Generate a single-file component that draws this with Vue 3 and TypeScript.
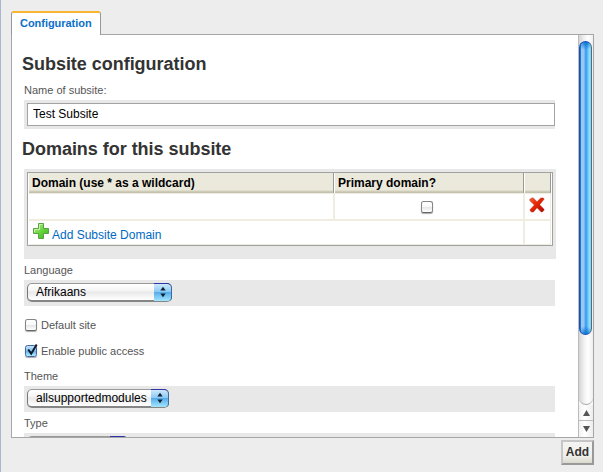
<script setup lang="ts">
import { ref } from 'vue'

const siteName = ref('Test Subsite')
const primary = ref(false)
const defaultSite = ref(false)
const publicAccess = ref(true)
</script>

<template>
  <main class="window">
    <nav class="tabs"><a class="tab">Configuration</a></nav>
    <section class="panel">
      <form class="content" @submit.prevent>
        <h3 class="h-first">Subsite configuration</h3>
        <label class="caption name-caption">Name of subsite:</label>
        <div class="band name-band"><input v-model="siteName" class="text" type="text" /></div>
        <h3 class="h-second">Domains for this subsite</h3>
        <div class="table-band">
          <div class="grid">
            <div class="row head">
              <div class="cell c1">Domain (use * as a wildcard)</div>
              <div class="cell c2">Primary domain?</div>
              <div class="cell c3"></div>
            </div>
            <div class="row entry">
              <div class="cell c1"></div>
              <div class="cell c2 center"><button type="button" class="check" @click="primary = !primary"></button></div>
              <div class="cell c3">
                <svg class="delete" width="16" height="16" viewBox="0 0 16 16">
                  <defs><linearGradient id="red" x2="1" y2="1"><stop stop-color="#e8694a" /><stop offset=".35" stop-color="#ee2d05" /><stop offset=".6" stop-color="#d91c05" /><stop offset="1" stop-color="#a80c08" /></linearGradient></defs>
                  <path d="M.8 2.3 3 .9h1.2L8 4.7 11.8 1h2.4l1 1L10.6 7.7l4.4 4.5v1L13.3 15h-1L8 10.7 4.4 15H2.6L1 13.5v-.8L5.4 8 .8 3.6Z" fill="url(#red)" stroke="#b52914" stroke-width=".5" />
                </svg>
              </div>
            </div>
            <div class="row add-row">
              <div class="cell span">
                <svg class="plus" width="16" height="16" viewBox="0 0 16 16">
                  <defs><linearGradient id="green" x2="1" y2="1"><stop stop-color="#b6ed8b" /><stop offset=".55" stop-color="#64d33a" /><stop offset="1" stop-color="#35ac17" /></linearGradient></defs>
                  <path d="M5.5.5h5v5h5v5h-5v5h-5v-5h-5v-5h5Z" fill="url(#green)" stroke="#57a343" />
                  <path d="M6.5 6.5v-5h3M1.5 9V6.5h5" fill="none" stroke="#caf2a9" />
                </svg>
                <a class="link">Add Subsite Domain</a>
              </div>
              <div class="cell c3"></div>
            </div>
          </div>
        </div>
        <label class="caption language">Language</label>
        <div class="band"><button type="button" class="select lang-select"><span class="value">Afrikaans</span><span class="stepper"><svg width="8" height="12" viewBox="0 0 8 12"><path d="M1.3 4.5 4 .7l2.7 3.8ZM1.3 7.5 4 11.3l2.7-3.8Z" fill="#102332" /></svg></span></button></div>
        <div class="option"><button type="button" class="check" @click="defaultSite = !defaultSite"></button><span>Default site</span></div>
        <div class="option">
          <button type="button" class="check checked" @click="publicAccess = !publicAccess">
            <svg v-if="publicAccess" width="14" height="15" viewBox="0 0 14 15"><path d="m3.2 6.5 3 4.2L11.7 1.5" fill="none" stroke="#101a2c" stroke-width="2" /></svg>
          </button><span>Enable public access</span>
        </div>
        <label class="caption theme">Theme</label>
        <div class="band"><button type="button" class="select theme-select"><span class="value">allsupportedmodules</span><span class="stepper"><svg width="8" height="12" viewBox="0 0 8 12"><path d="M1.3 4.5 4 .7l2.7 3.8ZM1.3 7.5 4 11.3l2.7-3.8Z" fill="#102332" /></svg></span></button></div>
        <label class="caption type">Type</label>
        <div class="band"><button type="button" class="select type-select"><span class="value"></span><span class="stepper"></span></button></div>
      </form>
      <aside class="scroll">
        <div class="track"><div class="thumb"></div></div>
        <div class="arrow"><svg width="7" height="6" viewBox="0 0 7 6"><path d="M3.5 0 7 6H0Z" fill="#555" /></svg></div>
        <div class="arrow down"><svg width="7" height="6" viewBox="0 0 7 6"><path d="M0 0h7L3.5 6Z" fill="#555" /></svg></div>
      </aside>
    </section>
    <footer><button class="add">Add</button></footer>
  </main>
</template>

<style>
body { margin: 0; background: #ededed; }
</style>

<style scoped>
* { box-sizing: border-box; }
button { padding: 0; font: inherit; }
svg { display: block; }
.window { width: 603px; height: 472px; overflow: hidden; padding: 11px 9px 0 10px; border-left: 1px solid #a9b8ce; background: #ededed; font: 11px/13px "Liberation Sans", Arial, sans-serif; color: #555; }
.tabs { height: 23px; }
.tab { position: relative; z-index: 1; display: block; width: 90px; height: 24px; padding: 3px 0 0 8px; background: #fff; border: 1px solid #999; border-top: 2px solid #f8b534; border-bottom: 0; border-radius: 3px 3px 0 0; font-weight: bold; font-size: 11px; line-height: 14px; letter-spacing: -.04px; color: #0b70c8; white-space: nowrap; }
.panel { display: flex; width: 583px; height: 404px; border: 1px solid #a6a6a6; background: #fff; overflow: hidden; }
.content { width: 566px; height: 402px; padding: 0 22px 0 12px; overflow: hidden; }
h3 { margin: 0 0 0 -2px; height: 22px; font-size: 18px; line-height: 22px; letter-spacing: -.03px; color: #333; white-space: nowrap; }
.h-first { margin-top: 18px; }
.caption { display: block; height: 13px; white-space: nowrap; }
.name-caption { margin-top: 9px; }
.band { height: 26px; padding: 3px; background: #e8e8e8; width: 531px; }
.name-band { height: 29px; margin-top: 3px; }
.text { display: block; width: 528px; height: 23px; margin: 0; padding: 0 5px 2px; border: 1px solid #a3a3a3; background: #fff; outline: 0; font: 12px "Liberation Sans", Arial, sans-serif; color: #000; }
.h-second { margin-top: 9px; }
.table-band { width: 532px; height: 90px; margin-top: 9px; padding: 3px; background: #e8e8e8; }
.grid { width: 526px; height: 74px; border: 1px solid #a1a19f; background: #fff; padding: 0 1px 1px; }
.row { display: flex; width: 522px; }
.cell { flex: none; height: 100%; border-right: 2px solid #efede0; }
.c1 { width: 306px; }
.c2 { width: 190px; }
.c3 { width: 26px; border-right: 1px solid #efede0; }
.span { display: flex; width: 496px; }
.head { height: 20px; font-weight: bold; font-size: 12px; line-height: 21px; color: #000; background: linear-gradient(#ebe9db 0 17px, #d4d1be 18px, #bdbbaa 20px); }
.head .cell { border-right: 1px solid #999; padding-left: 3px; white-space: nowrap; }
.head .c2, .head .c3 { border-left: 1px solid #fff; }
.head .c1 { width: 305px; }
.head .c3 { width: 27px; }
.entry { height: 28px; border-top: 1px solid #efede0; border-bottom: 2px solid #efede0; }
.center { display: flex; align-items: center; justify-content: center; padding: 1px 4px 0 0; }
.delete { margin: 3px 0 0 4px; }
.add-row { height: 24px; border-bottom: 1px solid #efede0; }
.plus { margin: 2px 0 0 4px; }
.link { margin: 7px 0 0 3px; font-size: 12px; line-height: 15px; color: #0069c2; }
.language { margin-top: 5px; }
.language + .band { margin-top: 3px; }
.select { display: flex; height: 19px; border: 1px solid #777; border-top-color: #999; border-bottom: 2px solid #858585; border-radius: 5px; background: linear-gradient(#fff, #f4f4f4 45%, #e8e8e8 48%, #fff); text-align: left; color: #000; font-size: 12px; line-height: 17px; }
.lang-select { width: 145px; }
.theme-select { width: 142px; }
.type-select { width: 99px; }
.value { flex: 1; min-width: 0; padding-left: 8px; white-space: nowrap; }
.stepper { display: flex; flex: none; justify-content: center; width: 18px; height: 18px; margin: -1px -1px 0 0; padding-top: 2px; border-top: 1px solid #3034a4; border-right: 1px solid #3c6c9e; border-radius: 0 5px 4px 0; background: linear-gradient(#cce8fc, #8cc9f4 45%, #55aceb 49%, #a3e6ff); }
.type-select { width: 101px; }
.option { display: flex; height: 14px; margin-top: 12px; align-items: center; white-space: nowrap; }
.check { position: relative; flex: none; width: 12px; height: 12px; border: 1px solid #858585; border-bottom-color: #666; border-radius: 2.5px; background: linear-gradient(#fff, #f8f8f8 45%, #e5e5e5 50%, #fff); box-shadow: 0 1px 1px #aaa; }
.option .check { margin: 0 4px 0 1px; }
.checked { border-color: #4567a1; background: linear-gradient(#c1e4ff, #8ac6f2 45%, #62afea 50%, #b2eeff); }
.checked svg { position: absolute; left: -1px; top: -3px; }
.theme { margin-top: 12px; }
.theme + .band { margin-top: 3px; }
.type { margin-top: 5px; }
.type + .band { margin-top: 3px; }
.scroll { width: 15px; height: 402px; border-left: 1px solid #bbb; background: #f8f8f8; }
.track { height: 370px; padding: 6px 1px 0 0; border-bottom: 1px solid #aaa; border-radius: 0 0 7px 7px; background: linear-gradient(90deg, #d5d5d5, #f0f0f0 35%, #fff 65%, #eee); }
.thumb { height: 294px; width: 13px; border: 1px solid #184fbd; border-right-color: #536b7b; border-radius: 7px; background: radial-gradient(8px 8px at 50% 0, #0875d1, transparent), radial-gradient(8px 8px at 50% 100%, #0875d1, transparent), linear-gradient(90deg, #1674e3 0 1px, #9ac6ef 1px 4px, #57acec 5px, #329af0 6px, #70c4fa 8px, #97e8ff 10px, #74bddb); }
.arrow { height: 15px; display: flex; align-items: center; justify-content: center; background: linear-gradient(90deg, #f1f1f1, #fff 40%, #eee); }
.down { height: 17px; border-top: 1px solid #bbb; }
footer { display: flex; justify-content: flex-end; height: 28px; padding: 2px 0 0; width: 583px; }
.add { width: 33px; height: 25px; border: 2px solid; border-color: #c6c6c6 #999 #999 #c6c6c6; background: linear-gradient(#f4f4f2, #eeeee9 70%, #d9d9ce); font-weight: bold; font-size: 12px; line-height: 21px; color: #333; }
</style>
